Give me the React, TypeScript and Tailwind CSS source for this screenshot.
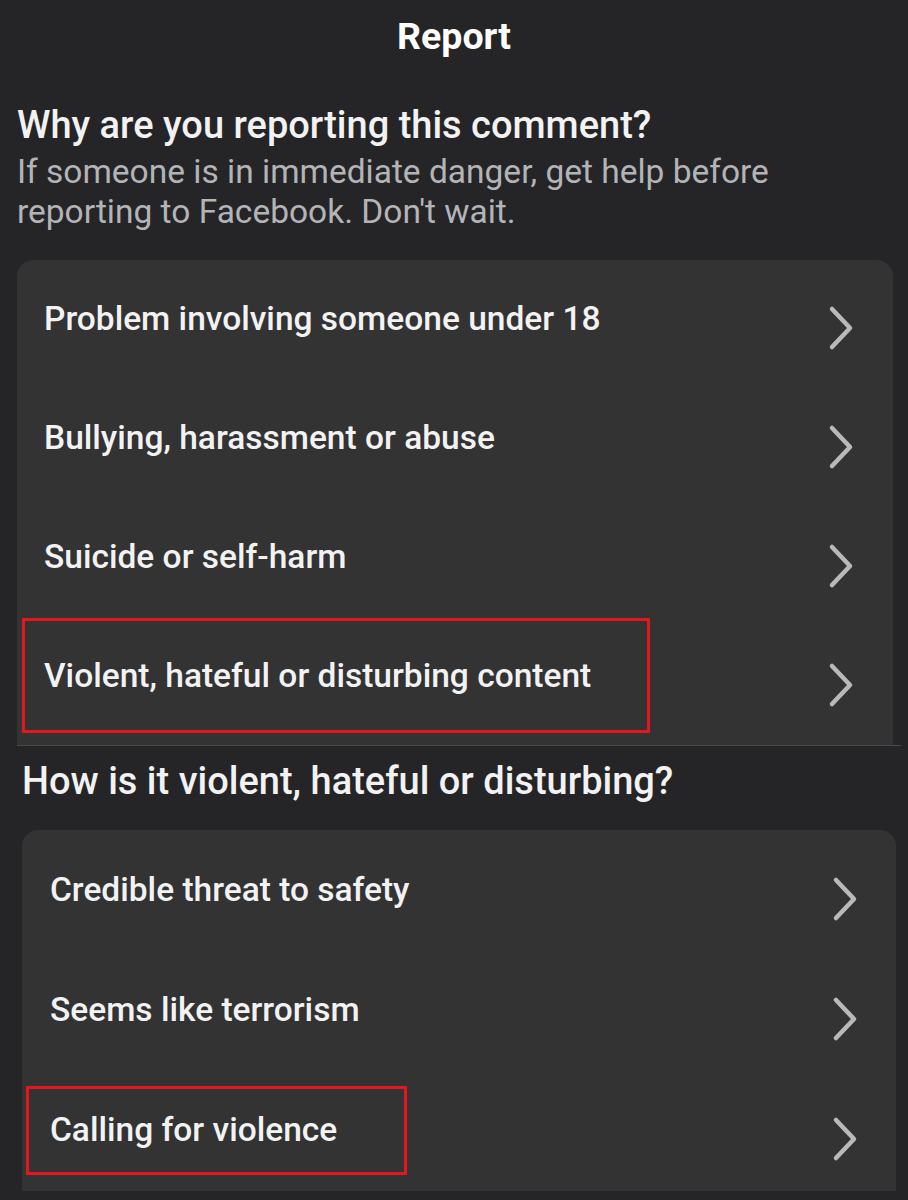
function Chevron() {
  return (
    <svg width="26" height="46" viewBox="0 0 26 46" className="mt-4 shrink-0">
      <path
        d="M4 4 L22 23 L4 42"
        fill="none"
        stroke="#b9b9ba"
        strokeWidth="4.5"
        strokeLinecap="round"
        strokeLinejoin="round"
      />
    </svg>
  );
}

type Row = { label: string; box?: string };

function OptionRow({ row, pad }: { row: Row; pad: string }) {
  return (
    <div className={`relative flex h-[119px] items-center justify-between ${pad}`}>
      <span className="text-[33.5px] font-medium text-[#f2f2f3]">{row.label}</span>
      <Chevron />
      {row.box && <div className={`pointer-events-none absolute border-[3px] border-[#e5161f] ${row.box}`} />}
    </div>
  );
}

export default function App() {
  const first: Row[] = [
    { label: "Problem involving someone under 18" },
    { label: "Bullying, harassment or abuse" },
    { label: "Suicide or self-harm" },
    {
      label: "Violent, hateful or disturbing content",
      box: "left-[5px] top-[1px] h-[115px] w-[628px]",
    },
  ];
  const second: Row[] = [
    { label: "Credible threat to safety" },
    { label: "Seems like terrorism" },
    {
      label: "Calling for violence",
      box: "left-[4px] top-[15px] h-[89px] w-[381px]",
    },
  ];

  return (
    <div className="h-[1200px] w-[908px] overflow-hidden bg-[#252527] font-['Roboto','Liberation_Sans',sans-serif]">
      <header className="flex h-[72px] items-center justify-center">
        <h1 className="text-[37.5px] font-bold text-white">Report</h1>
      </header>

      <section className="px-[17px] pt-[30px]">
        <h2 className="whitespace-nowrap text-[38px] font-medium leading-[46px] text-[#f2f2f3]">
          Why are you reporting this comment?
        </h2>
        <p className="mt-[4px] whitespace-nowrap text-[33.5px] leading-[40px] text-[#b3b4b7]">
          If someone is in immediate danger, get help before
          <br />
          reporting to Facebook. Don't wait.
        </p>
        <div className="mt-[28px] w-[876px] rounded-t-2xl bg-[#333334]">
          {first.map((r) => (
            <OptionRow key={r.label} row={r} pad="pl-[27px] pr-[39px]" />
          ))}
          <div className="h-[9px]" />
        </div>
      </section>
      <div className="ml-[17px] h-px w-[884px] bg-[#48494b]" />

      <section className="px-[22px] pt-[12px]">
        <h2 className="whitespace-nowrap text-[38px] font-medium leading-[46px] text-[#f2f2f3]">
          How is it violent, hateful or disturbing?
        </h2>
        <div className="mt-[26px] w-[874px] rounded-t-2xl bg-[#333334] pt-[1px]">
          {second.map((r) => (
            <div key={r.label} className="h-[120px]">
              <OptionRow row={r} pad="pl-[28px] pr-[38px]" />
            </div>
          ))}
        </div>
      </section>
    </div>
  );
}
